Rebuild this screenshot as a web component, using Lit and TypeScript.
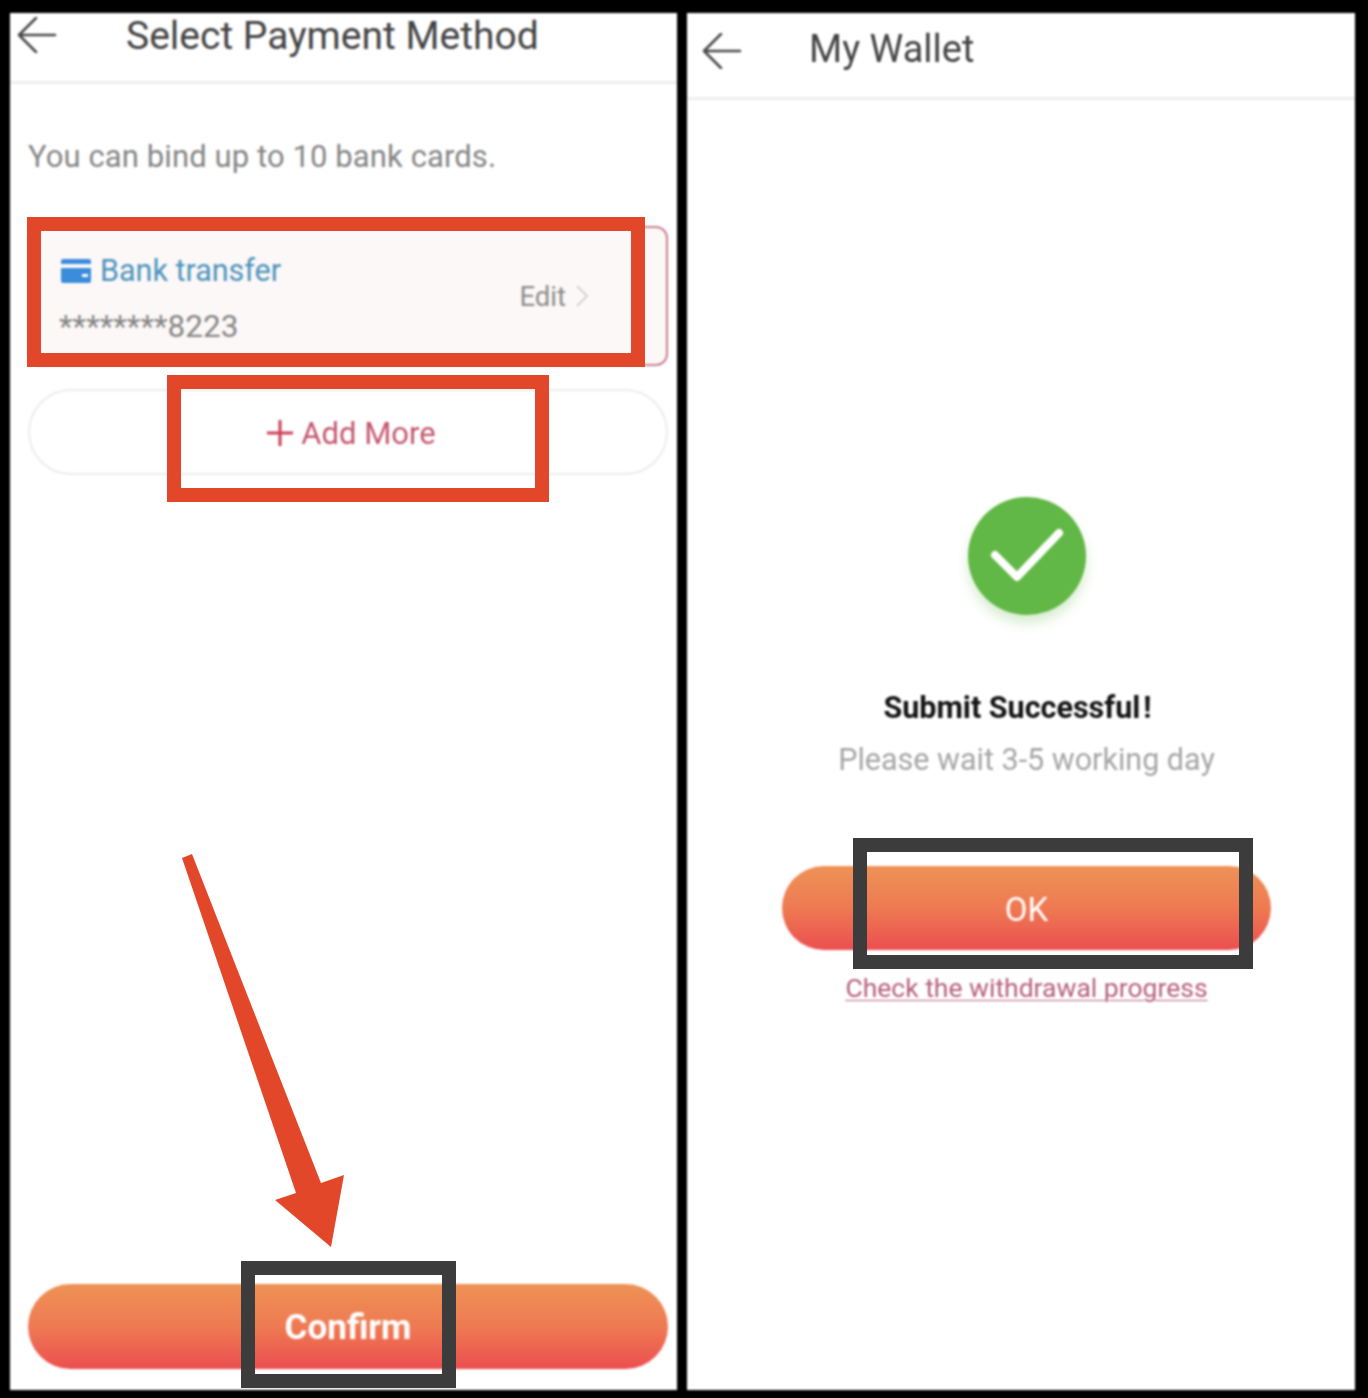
import { LitElement, html, css } from "lit";
import { customElement } from "lit/decorators.js";

const backArrow = html`<svg class="back" viewBox="0 0 40 36" width="40" height="36" fill="none" stroke="#4a4a4a" stroke-width="2.6" stroke-linecap="round" stroke-linejoin="round">
  <path d="M38 18H2M19 1 2 18l17 17" />
</svg>`;

@customElement("app-root")
export class AppRoot extends LitElement {
  static styles = css`
    :host {
      display: block;
      position: relative;
      height: 1398px;
      background: #000;
      font-family: Roboto, "Liberation Sans", sans-serif;
      overflow: hidden;
    }
    .screens {
      display: flex;
      gap: 10px;
      padding: 13px 13px 8px 10px;
      height: 1377px;
      filter: blur(0.8px);
    }
    .panel {
      flex: 1;
      display: flex;
      flex-direction: column;
      background: #fff;
      min-width: 0;
    }
    .left {
      flex: 0 0 667px;
    }
    .header {
      display: flex;
      align-items: center;
      box-sizing: border-box;
      border-bottom: 3px solid #eeeeee;
      color: #444;
    }
    .left .header {
      height: 71px;
      padding: 0 0 25px 7px;
      gap: 69px;
      font-size: 39px;
    }
    .left .header span {
      margin-top: 3px;
    }
    .right .header {
      height: 87px;
      padding: 0 0 17px 15px;
      gap: 67px;
      font-size: 38px;
    }
    .right .header span {
      margin-top: 4px;
    }
    .right .back {
      margin-top: 8px;
    }
    .left-body {
      flex: 1;
      display: flex;
      flex-direction: column;
      padding: 53px 9px 21px 18px;
    }
    .hint {
      font-size: 31px;
      line-height: 40px;
      letter-spacing: 0.1px;
      color: #858585;
    }
    .card {
      margin-top: 49px;
      height: 140px;
      box-sizing: border-box;
      display: flex;
      align-items: center;
      justify-content: space-between;
      padding: 0 78px 0 31px;
      background: #fcf8f7;
      border: 2px solid #c9818d;
      border-radius: 12px;
    }
    .card-main {
      display: flex;
      flex-direction: column;
      gap: 20px;
      padding-top: 6px;
    }
    .method {
      display: flex;
      align-items: center;
      gap: 9px;
      font-size: 30.5px;
      line-height: 36px;
      color: #4d93bd;
    }
    .number {
      margin-left: -2px;
      font-size: 31.5px;
      line-height: 36px;
      color: #858585;
    }
    .edit {
      display: flex;
      align-items: center;
      gap: 10px;
      font-size: 27.5px;
      color: #8c8c8c;
    }
    .add {
      margin-top: 23px;
      height: 86px;
      box-sizing: border-box;
      display: flex;
      align-items: center;
      justify-content: center;
      gap: 8px;
      padding: 2px 0 0 7px;
      border: 2px solid #ececec;
      border-radius: 43px;
      font-size: 31px;
      color: #c4566e;
    }
    .pill {
      display: flex;
      align-items: center;
      justify-content: center;
      color: #fff;
      background: linear-gradient(180deg, #ee9256 0%, #ee7a52 50%, #ec4f50 100%);
    }
    .confirm {
      margin-top: auto;
      height: 85px;
      box-sizing: border-box;
      padding-top: 2px;
      border-radius: 43px;
      font-size: 35px;
      font-weight: 700;
    }
    .right-body {
      flex: 1;
      display: flex;
      flex-direction: column;
      align-items: center;
      padding: 397px 0 0 11px;
    }
    .check {
      width: 118px;
      height: 118px;
      border-radius: 50%;
      background: #62b846;
      box-shadow: 0 8px 12px rgba(98, 184, 70, 0.25);
      display: flex;
      align-items: center;
      justify-content: center;
    }
    .success {
      margin: 75px 0 0 -18px;
      font-size: 30.5px;
      line-height: 36px;
      font-weight: 700;
      color: #141414;
    }
    .success span {
      margin-left: 3px;
    }
    .wait {
      margin-top: 16px;
      font-size: 30.5px;
      line-height: 36px;
      color: #a6a6a6;
    }
    .ok {
      margin-top: 88px;
      width: 489px;
      height: 84px;
      border-radius: 42px;
      font-size: 33px;
      padding-top: 2px;
      box-sizing: border-box;
    }
    .progress {
      margin-top: 20px;
      font-size: 26.5px;
      line-height: 36px;
      color: #b65f7b;
      text-decoration: underline;
      text-underline-offset: 3px;
      text-decoration-thickness: 1px;
    }

    /* annotations painted over the screenshot */
    .mark {
      position: absolute;
      box-sizing: border-box;
      border: 14px solid #e2472a;
    }
    .mark.dark {
      border-color: #3c3c3c;
    }
    .mark-card {
      left: 27px;
      top: 217px;
      width: 618px;
      height: 150px;
    }
    .mark-add {
      left: 167px;
      top: 375px;
      width: 382px;
      height: 127px;
    }
    .mark-confirm {
      left: 241px;
      top: 1261px;
      width: 215px;
      height: 127px;
    }
    .mark-ok {
      left: 853px;
      top: 838px;
      width: 400px;
      height: 131px;
    }
    .big-arrow {
      position: absolute;
      left: 0;
      top: 0;
      pointer-events: none;
    }
  `;

  render() {
    return html`
      <div class="screens">
        <section class="panel left">
          <div class="header">${backArrow}<span>Select Payment Method</span></div>
          <div class="left-body">
            <div class="hint">You can bind up to 10 bank cards.</div>
            <div class="card">
              <div class="card-main">
                <div class="method">
                  <svg width="30" height="24" viewBox="0 0 30 24">
                    <path fill="#3b8cdb" d="M0 2a2 2 0 0 1 2-2h26a2 2 0 0 1 2 2v3H0zM0 9h30v13a2 2 0 0 1-2 2H2a2 2 0 0 1-2-2z" />
                    <rect x="21" y="15" width="6" height="3" fill="#fff" />
                  </svg>
                  <span>Bank transfer</span>
                </div>
                <div class="number">********8223</div>
              </div>
              <div class="edit">
                <span>Edit</span>
                <svg width="12" height="22" viewBox="0 0 12 22" fill="none" stroke="#d4d4d4" stroke-width="2">
                  <path d="m1 1 10 10L1 21" />
                </svg>
              </div>
            </div>
            <div class="add">
              <svg width="26" height="26" viewBox="0 0 26 26" stroke="#cc4058" stroke-width="3">
                <path d="M13 0v26M0 13h26" />
              </svg>
              <span>Add More</span>
            </div>
            <div class="pill confirm">Confirm</div>
          </div>
        </section>
        <section class="panel right">
          <div class="header">${backArrow}<span>My Wallet</span></div>
          <div class="right-body">
            <div class="check">
              <svg width="74" height="58" viewBox="0 0 74 58" fill="none" stroke="#fff" stroke-width="8" stroke-linecap="round" stroke-linejoin="round">
                <path d="M5 28 27 50 69 6" />
              </svg>
            </div>
            <div class="success">Submit Successful<span>!</span></div>
            <div class="wait">Please wait 3-5 working day</div>
            <div class="pill ok">OK</div>
            <div class="progress">Check the withdrawal progress</div>
          </div>
        </section>
      </div>
      <div class="mark mark-card"></div>
      <div class="mark mark-add"></div>
      <div class="mark dark mark-confirm"></div>
      <div class="mark dark mark-ok"></div>
      <svg class="big-arrow" width="1368" height="1398" viewBox="0 0 1368 1398">
        <polygon fill="#e2472a" points="182,858 192,854 321,1183 344,1175 331,1247 275,1200 296,1193" />
      </svg>
    `;
  }
}
